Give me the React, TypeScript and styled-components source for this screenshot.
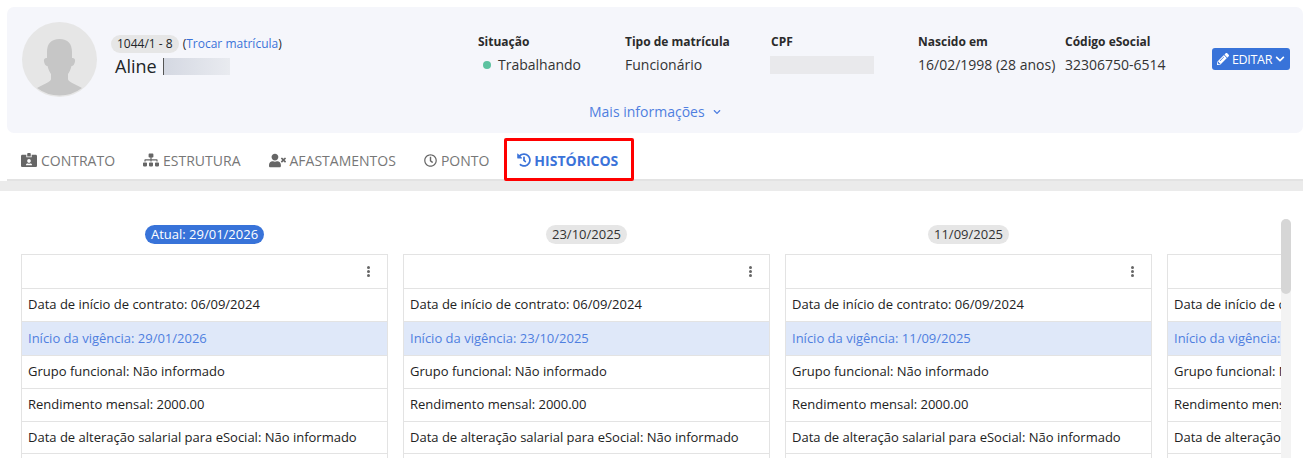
import React from "react";
import styled, { createGlobalStyle } from "styled-components";
import { FaChevronDown, FaHistory, FaIdCardAlt, FaPencilAlt, FaRegClock, FaSitemap, FaUserTimes } from "react-icons/fa";

const GlobalStyle = createGlobalStyle`
    html, body {
        margin: 0;
        height: 100%;
        overflow: hidden;
        background: #fff;
        font-family: "Open Sans", sans-serif;
        font-size: 13px;
        color: #212529;
    }
    * { box-sizing: border-box; }
`;

const infoFields = [
    { label: "Situação", value: "Trabalhando", width: 147, dot: true },
    { label: "Tipo de matrícula", value: "Funcionário", width: 146 },
    { label: "CPF", value: "", width: 147, hidden: true },
    { label: "Nascido em", value: "16/02/1998 (28 anos)", width: 147 },
    { label: "Código eSocial", value: "32306750-6514", width: 147 },
];

const tabs = [
    { label: "CONTRATO", icon: <FaIdCardAlt size={16} /> },
    { label: "ESTRUTURA", icon: <FaSitemap size={16} /> },
    { label: "AFASTAMENTOS", icon: <FaUserTimes size={17} /> },
    { label: "PONTO", icon: <FaRegClock size={13} /> },
    { label: "HISTÓRICOS", icon: <FaHistory size={14} />, active: true },
];

const versions = [
    { tag: "Atual: 29/01/2026", start: "29/01/2026", current: true },
    { tag: "23/10/2025", start: "23/10/2025" },
    { tag: "11/09/2025", start: "11/09/2025" },
    { tag: "02/06/2025", start: "02/06/2025" },
];

const App = () => {
    return (
        <Page>
            <GlobalStyle />
            <Panel>
                <Avatar>
                    <svg width="75" height="75" viewBox="0 0 75 75">
                        <circle cx="37.5" cy="37.5" r="37.5" fill="#e6e6e6" />
                        <path
                            d="M37.5 17C29 17 25 22 25 30V36C23 35.5 21.5 37 22 39.5C22.5 42 23.5 44 25.5 44C26.5 48 28 50.5 29 52V57C29 59 26 60.5 15 66A37.5 37.5 0 0 0 60 66C49 60.5 46 59 46 57V52C47 50.5 48.5 48 49.5 44C51.5 44 52.5 42 53 39.5C53.5 37 52 35.5 50 36V30C50 22 46 17 37.5 17Z"
                            fill="#c6c6c6"
                        />
                    </svg>
                </Avatar>
                <Identity>
                    <div>
                        <Badge>1044/1 - 8</Badge>
                        <SwitchText>
                            (<SwitchLink>Trocar matrícula</SwitchLink>)
                        </SwitchText>
                    </div>
                    <Name>
                        Aline <NameBlur />
                    </Name>
                </Identity>
                <InfoRow>
                    {infoFields.map((f) => (
                        <Field key={f.label} $width={f.width}>
                            <FieldLabel>{f.label}</FieldLabel>
                            {f.hidden ? (
                                <CpfBlur />
                            ) : (
                                <FieldValue $dot={f.dot}>
                                    {f.dot && <Dot />}
                                    {f.value}
                                </FieldValue>
                            )}
                        </Field>
                    ))}
                </InfoRow>
                <EditButton>
                    <FaPencilAlt size={12} />
                    <EditLabel>EDITAR</EditLabel>
                    <FaChevronDown size={10} />
                </EditButton>
                <MoreInfo>
                    Mais informações <FaChevronDown size={8} />
                </MoreInfo>
            </Panel>
            <TabBar>
                {tabs.map((t) => (
                    <Tab key={t.label} $active={t.active}>
                        {t.icon}
                        {t.label}
                    </Tab>
                ))}
            </TabBar>
            <Band />
            <Content>
                <Columns>
                    {versions.map((v) => (
                        <Column key={v.tag}>
                            <TagRow>
                                <DateTag $current={v.current}>{v.tag}</DateTag>
                            </TagRow>
                            <Card>
                                <CardHead>
                                    <Kebab><i /><i /><i /></Kebab>
                                </CardHead>
                                <Row $h={33}>Data de início de contrato: 06/09/2024</Row>
                                <Row $h={34} $highlight>Início da vigência: {v.start}</Row>
                                <Row $h={33}>Grupo funcional: Não informado</Row>
                                <Row $h={33}>Rendimento mensal: 2000.00</Row>
                                <Row $h={32}>Data de alteração salarial para eSocial: Não informado</Row>
                                <Row $h={33} />
                            </Card>
                        </Column>
                    ))}
                </Columns>
                <ScrollTrack>
                    <ScrollThumb />
                </ScrollTrack>
            </Content>
        </Page>
    );
};

const Page = styled.div`
    width: 1303px;
    height: 458px;
    overflow: hidden;
    padding-top: 7px;
`;

const Panel = styled.section`
    position: relative;
    height: 126px;
    margin-left: 7px;
    padding: 15px 13px 0 15px;
    display: flex;
    align-items: flex-start;
    background: #f5f6fb;
    border-radius: 7px;
`;

const Avatar = styled.div`
    width: 75px;
    height: 75px;
    flex: none;
    svg { display: block; }
`;

const Identity = styled.div`
    width: 381px;
    flex: none;
    padding: 12px 0 0 14px;
    line-height: 18px;
`;

const Badge = styled.span`
    display: inline-block;
    padding: 0 6px;
    height: 18px;
    font-size: 12px;
    line-height: 18px;
    background: #e6e6e6;
    border-radius: 9px;
`;

const SwitchText = styled.span`
    margin-left: 4px;
    font-size: 12px;
`;

const SwitchLink = styled.span`
    color: #3b73d9;
`;

const Name = styled.div`
    display: flex;
    align-items: center;
    margin: 4px 0 0 4px;
    height: 18px;
    font-size: 18px;
    white-space: pre;
`;

const NameBlur = styled.span`
    display: inline-block;
    width: 67px;
    height: 17px;
    margin: 1px 0 0 2px;
    border-left: 1px solid #555;
    background: linear-gradient(90deg, #d4d8e2, #e9ebf0);
`;

const InfoRow = styled.div`
    display: flex;
    width: 734px;
    flex: none;
    padding-top: 12px;
`;

const Field = styled.div<{ $width: number }>`
    width: ${(p) => p.$width}px;
    flex: none;
`;

const FieldLabel = styled.div`
    font-size: 12px;
    line-height: 16px;
    font-weight: 700;
    color: #2b2b2b;
`;

const FieldValue = styled.div<{ $dot?: boolean }>`
    display: flex;
    align-items: center;
    margin-top: 5px;
    font-size: 14px;
    line-height: 20px;
    white-space: nowrap;
    color: #333;
    padding-left: ${(p) => (p.$dot ? "5px" : "0")};
`;

const Dot = styled.span`
    width: 8px;
    height: 8px;
    margin-right: 7px;
    border-radius: 50%;
    background: #5cc2a0;
`;

const CpfBlur = styled.div`
    width: 104px;
    height: 18px;
    margin: 6px 0 0 -1px;
    background: #e9e9ec;
`;

const EditButton = styled.button`
    display: flex;
    flex: none;
    align-items: center;
    justify-content: center;
    gap: 3px;
    width: 78px;
    height: 22px;
    margin-top: 26px;
    padding: 0;
    border: 0;
    border-radius: 3px;
    background: #3873d9;
    color: #fff;
    font-family: inherit;
`;

const EditLabel = styled.span`
    font-size: 12.5px;
    letter-spacing: -0.3px;
`;

const MoreInfo = styled.div`
    position: absolute;
    left: 582px;
    top: 95px;
    display: flex;
    align-items: center;
    gap: 8px;
    font-size: 14px;
    line-height: 19px;
    color: #4f7fe0;
`;

const TabBar = styled.nav`
    display: flex;
    height: 48px;
    margin-left: 7px;
    padding-left: 6px;
    border-bottom: 2px solid #e3e3e3;
`;

const Tab = styled.div<{ $active?: boolean }>`
    position: relative;
    display: flex;
    align-items: center;
    gap: 4px;
    padding: 8px 8px 0 8px;
    margin-right: 12px;
    font-size: 14px;
    font-weight: ${(p) => (p.$active ? 700 : 400)};
    color: ${(p) => (p.$active ? "#3b73d9" : "#777")};
    svg { color: ${(p) => (p.$active ? "#3b73d9" : "#666")}; }

    ${(p) =>
        p.$active &&
        `
        margin-left: -5px;
        gap: 3px;
        padding: 8px 16px 0 13px;
        &::after {
            content: "";
            position: absolute;
            inset: 5px 0 -2px 0;
            border: 3px solid #f00;
            border-radius: 2px;
        }
    `}
`;

const Band = styled.div`
    height: 10px;
    background: #ebebeb;
`;

const Content = styled.div`
    position: relative;
    height: 267px;
    padding: 0 22px 0 21px;
    overflow: hidden;
`;

const Columns = styled.div`
    display: flex;
    gap: 15px;
    width: 1260px;
    overflow: hidden;
`;

const Column = styled.div`
    width: 367px;
    flex: none;
`;

const TagRow = styled.div`
    display: flex;
    justify-content: center;
    height: 63px;
    padding-top: 34px;
`;

const DateTag = styled.span<{ $current?: boolean }>`
    height: 19px;
    padding: 0 6px;
    font-size: 13px;
    line-height: 19px;
    border-radius: 10px;
    background: ${(p) => (p.$current ? "#3873d9" : "#e6e6e6")};
    color: ${(p) => (p.$current ? "#fff" : "#333")};
`;

const Card = styled.div`
    border: 1px solid #e3e3e3;
    border-bottom: 0;
`;

const CardHead = styled.div`
    display: flex;
    align-items: center;
    justify-content: flex-end;
    height: 33px;
    padding-right: 17px;
`;

const Kebab = styled.div`
    display: flex;
    flex-direction: column;
    gap: 1px;
    i {
        display: block;
        width: 3px;
        height: 3px;
        border-radius: 50%;
        background: #666;
    }
`;

const Row = styled.div<{ $h: number; $highlight?: boolean }>`
    display: flex;
    align-items: center;
    height: ${(p) => p.$h}px;
    padding: 0 0 2px 6px;
    border-top: 1px solid #e3e3e3;
    white-space: nowrap;
    font-size: 13px;
    background: ${(p) => (p.$highlight ? "#dfe8f9" : "transparent")};
    color: ${(p) => (p.$highlight ? "#4f7fe0" : "#222")};
`;

const ScrollTrack = styled.div`
    position: absolute;
    top: 28px;
    left: 1281px;
    width: 10px;
    bottom: 0;
    background: #f3f3f3;
    border-radius: 5px 5px 0 0;
`;

const ScrollThumb = styled.div`
    height: 75px;
    background: #d6d6d6;
    border-radius: 5px;
`;

export default App;
